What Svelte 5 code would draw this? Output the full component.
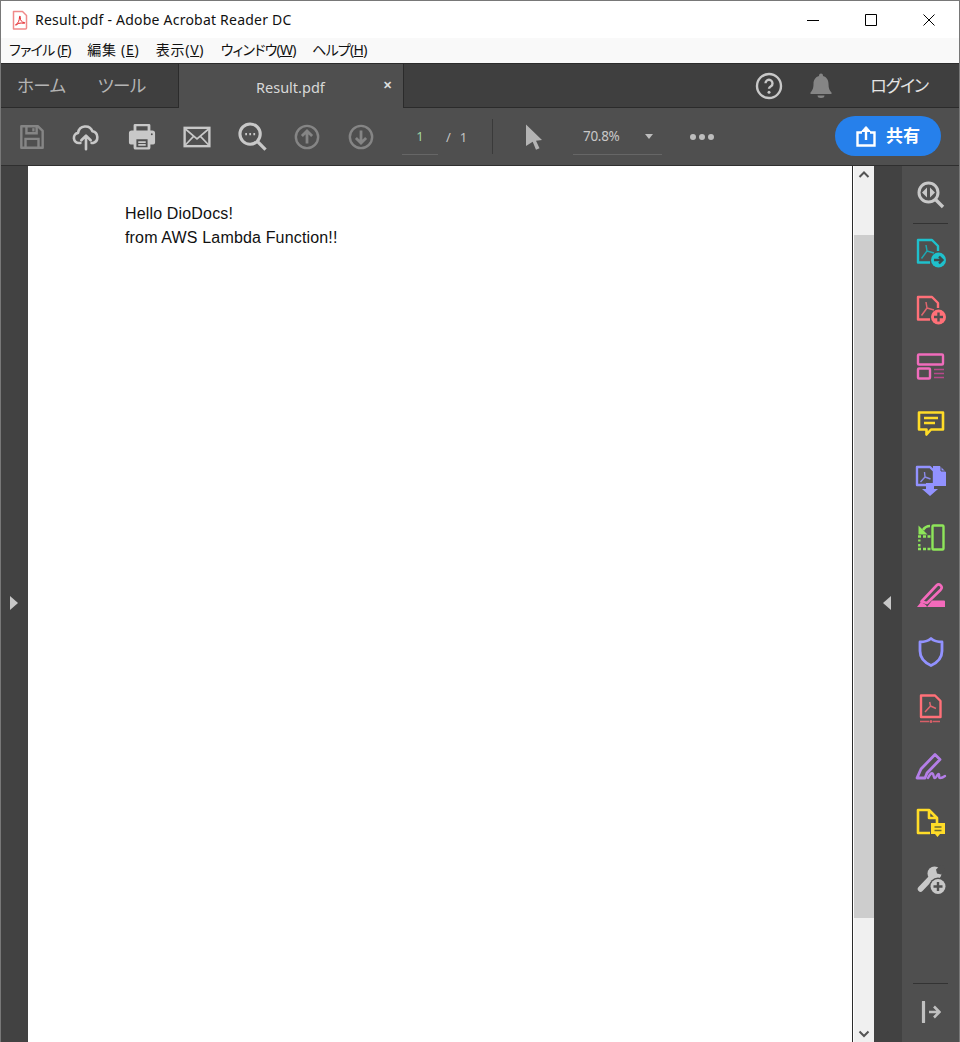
<script>
  const menus = [
    ['ファイル (', 'F', ')', 'kana'],
    ['編集 (', 'E', ')', 'kanji'],
    ['表示(', 'V', ')', 'kanji'],
    ['ウィンドウ(', 'W', ')', 'kana'],
    ['ヘルプ(', 'H', ')', 'kana']
  ];
</script>

<div class="win">
  <header class="title">
    <svg class="pdf" width="16" height="20" viewBox="0 0 16 20" fill="none">
      <path d="M1.500 1.500h9l4 4v12.500a1 1 0 0 1-1 1h-12z" fill="#fff" stroke="#f08a8a" stroke-width="1.500" stroke-linejoin="round"/>
      <path d="M4 14.500c2-1 3.500-4 3.500-7.500 0-1.500 1.200-1 .8.800-.4 2 1.700 4.700 3.700 4.700 1.500 0 1 1.200-.5.800-2-.5-5-.5-7 1.500-.8.800-1.500 0-.5-.3z" stroke="#e5252a" stroke-width="1"/>
    </svg>
    <span class="title-text">Result.pdf - Adobe Acrobat Reader DC</span>
    <div class="winbtns">
      <svg width="14" height="14" viewBox="0 0 14 14"><path d="M1 7.500h12" stroke="#000" stroke-width="1"/></svg>
      <svg width="14" height="14" viewBox="0 0 14 14"><path d="M1.500 1.500h11v11h-11z" stroke="#000" fill="none"/></svg>
      <svg width="14" height="14" viewBox="0 0 14 14"><path d="M1.500 1.500l11 11M12.500 1.500l-11 11" stroke="#000" fill="none"/></svg>
    </div>
  </header>

  <nav class="menu">
    {#each menus as m}
      <span class={m[3]}>{m[0]}<u>{m[1]}</u>{m[2]}</span>
    {/each}
  </nav>

  <div class="tabs">
    <div class="tab-links"><span>ホーム</span><span>ツール</span></div>
    <div class="doc-tab"><span class="doc-name">Result.pdf</span><span class="close">✕</span></div>
    <div class="tab-right">
      <svg width="28" height="28" viewBox="0 0 28 28" fill="none">
        <circle cx="14" cy="14" r="12" stroke="#c8c8c8" stroke-width="2.400"/>
        <path d="M10.500 11.300a3.500 3.500 0 1 1 5.400 3c-1.300.8-1.900 1.300-1.900 2.500" stroke="#c8c8c8" stroke-width="2.400"/>
        <circle cx="14" cy="20.300" r="1.500" fill="#c8c8c8"/>
      </svg>
      <svg width="24" height="28" viewBox="0 0 24 28" fill="#858585">
        <path d="M12 1.500a2 2 0 0 1 2 2v.6c3.700 1 5.500 4 5.500 8 0 4.500 1.200 6.500 3 8.400v1.500h-21v-1.500c1.800-1.900 3-3.900 3-8.400 0-4 1.800-7 5.500-8v-.6a2 2 0 0 1 2-2z"/>
        <path d="M8.500 23.500h7a3.500 2.500 0 0 1-7 0z"/>
      </svg>
      <span class="login">ログイン</span>
    </div>
  </div>

  <div class="toolbar">
    <div class="tools">
      <svg width="26" height="26" viewBox="0 0 28 28" fill="none" stroke="#858585" stroke-width="2.600">
        <path d="M2.500 2.500h18l5 5v18h-23z" stroke-linejoin="round"/>
        <path d="M8 2.500v7.500h11V2.500M7 25.500V16h14v9.500"/>
        <path d="M15.500 4.500v3.500" stroke-width="2.500"/>
      </svg>
      <svg width="28" height="30" viewBox="0 0 30 30" fill="none" stroke="#c8c8c8" stroke-width="2.800" stroke-linecap="round" stroke-linejoin="round">
        <path d="M9 21.500H7.500a5.500 5.500 0 0 1-1-10.900 8 8 0 0 1 15.400-1.700 6.500 6.500 0 0 1 .6 12.600H21"/>
        <path d="M15 28V14M10 18.500l5-5 5 5"/>
      </svg>
      <svg width="28" height="28" viewBox="0 0 30 30">
        <path fill="#c8c8c8" d="M6 8V2.500a1.500 1.500 0 0 1 1.500-1.500h15A1.500 1.500 0 0 1 24 2.500V8h2a3 3 0 0 1 3 3v10a2 2 0 0 1-2 2h-3v3.500a2 2 0 0 1-2 2H8a2 2 0 0 1-2-2V23H3a2 2 0 0 1-2-2V11a3 3 0 0 1 3-3z"/>
        <path fill="#4f4f4f" d="M9 3.500h12V8H9zM9 17.500h12V26H9z"/>
        <path stroke="#c8c8c8" stroke-width="2" d="M11 20.500h8M11 23.500h8"/>
        <circle cx="25.500" cy="12" r="1" fill="#4f4f4f"/>
      </svg>
      <svg width="28" height="22" viewBox="0 0 30 24" fill="none" stroke="#c8c8c8">
        <rect x="1.500" y="2" width="27" height="20" stroke-width="2.600"/>
        <path d="M2 3l13 11L28 3M2 21l9.500-10M28 21l-9.500-10" stroke-width="1.800"/>
      </svg>
      <svg width="29" height="29" viewBox="0 0 30 30" fill="none" stroke="#c8c8c8">
        <circle cx="12.500" cy="12.500" r="10.500" stroke-width="3.200"/>
        <path d="M20.500 20.500l8 8" stroke-width="3.400"/>
        <path d="M7.500 12.500h1.800M11.700 12.500h1.800M15.900 12.500h1.800" stroke-width="2.400"/>
      </svg>
      <svg width="26" height="26" viewBox="0 0 28 28" fill="none" stroke="#858585" stroke-width="2.600">
        <circle cx="14" cy="14" r="12"/>
        <path d="M14 21V8M8.500 13L14 7.500l5.500 5.500" stroke-width="3"/>
      </svg>
      <svg width="26" height="26" viewBox="0 0 28 28" fill="none" stroke="#858585" stroke-width="2.600">
        <circle cx="14" cy="14" r="12"/>
        <path d="M14 7v13M8.500 15l5.500 5.500 5.500-5.500" stroke-width="3"/>
      </svg>
    </div>
    <div class="page-nav">
      <span class="page-box">1</span><span class="slash">/</span><span>1</span>
    </div>
    <div class="vsep"></div>
    <svg class="cursor" width="18" height="26" viewBox="0 0 18 26"><path fill="#b4b4b4" d="M1 .5l16 15.500-6 .8 3.500 7.500-3.500 1.500-3.300-8L1 22z"/></svg>
    <div class="zoom-box"><span>70.8%</span><i></i></div>
    <div class="dots"><b></b><b></b><b></b></div>
    <button class="share">
      <svg width="20" height="22" viewBox="0 0 20 22" fill="none" stroke="#fff" stroke-width="2.400">
        <path d="M6 7.500H1.500v13h17v-13H14"/>
        <path d="M10 15V2.500"/>
        <path d="M5.500 6.500L10 1.500l4.500 5z" fill="#fff" stroke-width="1"/>
      </svg>
      <span>共有</span>
    </button>
  </div>

  <main class="body">
    <aside class="rail-left"><i class="arr-r"></i></aside>
    <section class="page">
      <p>Hello DioDocs!</p>
      <p>from AWS Lambda Function!!</p>
    </section>
    <div class="scroll">
      <svg width="20" height="16" viewBox="0 0 20 16" fill="none" stroke="#555" stroke-width="2"><path d="M5.500 10.500L10 6l4.500 4.500"/></svg>
      <div class="track-top"></div>
      <div class="thumb"></div>
      <div class="track-bottom"></div>
      <svg width="20" height="16" viewBox="0 0 20 16" fill="none" stroke="#555" stroke-width="2"><path d="M5.500 6L10 10.500 14.500 6"/></svg>
    </div>
    <aside class="rail-mid"><i class="arr-l"></i></aside>
    <aside class="rail-right">
      <div class="ico first">
        <svg width="28" height="28" viewBox="0 0 28 28" fill="none" stroke="#c8c8c8">
          <circle cx="11.500" cy="11.500" r="9.500" stroke-width="3"/>
          <path d="M18.500 18.500l7.500 7.500" stroke-width="3.400"/>
          <path d="M10 6.500v10l-5-5zM13 6.500v10l5-5z" fill="#c8c8c8" stroke="none"/>
        </svg>
      </div>
      <div class="hsep"></div>
      <div class="ico">
        <svg width="30" height="30" viewBox="0 0 30 30" fill="none" stroke="#1fc0cc" stroke-width="2.400">
          <path d="M14 24.500H2V2h14l6 6v5" stroke-linejoin="round"/>
          <path d="M5.500 20.500L11 13l-1-6M11 13l7 2" stroke-width="1.500" stroke="#1ea5b0"/>
          <circle cx="22.500" cy="22" r="7.500" fill="#1fc0cc" stroke="none"/>
          <path d="M18 22h8M23 18.500l3.500 3.500-3.500 3.500" stroke="#3d4a4d" stroke-width="2.400"/>
        </svg>
      </div>
      <div class="ico">
        <svg width="30" height="30" viewBox="0 0 30 30" fill="none" stroke="#ff7078" stroke-width="2.400">
          <path d="M14 24.500H2V2h14l6 6v5" stroke-linejoin="round"/>
          <path d="M5.500 20.500L11 13l-1-6M11 13l7 2" stroke-width="1.500" stroke="#e0666e"/>
          <circle cx="22.500" cy="22" r="7.500" fill="#ff7078" stroke="none"/>
          <path d="M18 22h9M22.500 17.500v9" stroke="#4f4f4f" stroke-width="2.400"/>
        </svg>
      </div>
      <div class="ico">
        <svg width="30" height="28" viewBox="0 0 30 28" fill="none" stroke="#f06cbc" stroke-width="2.400">
          <rect x="2" y="1.500" width="25" height="10" rx="1"/>
          <rect x="2" y="15.500" width="12" height="10" rx="1"/>
          <path d="M18 16.500h10M18 20.500h10M18 24.500h10" stroke="#b8488c" stroke-width="1.600"/>
        </svg>
      </div>
      <div class="ico">
        <svg width="28" height="28" viewBox="0 0 28 28" fill="none" stroke="#ffdc28" stroke-width="2.600">
          <path d="M2 2.500h24v17H14l-4.500 5v-5H2z" stroke-linejoin="round"/>
          <path d="M7 8h14M7 13h11" stroke-width="2.400"/>
        </svg>
      </div>
      <div class="ico">
        <svg width="32" height="32" viewBox="0 0 32 32">
          <path d="M18 1h7l6 6v14H19v-9l-1-2z" fill="#9292ff"/>
          <path d="M26 1v5h5" fill="none" stroke="#4f4f4f" stroke-width="1"/>
          <path d="M2 2h13l4 4v14H2z" fill="#4f4f4f" stroke="#9292ff" stroke-width="2.400" stroke-linejoin="round"/>
          <path d="M5.500 17L10 12 9.500 7M10 12l5.500 2" fill="none" stroke="#8a8ae8" stroke-width="1.400"/>
          <path d="M11 18h8v6h4l-8 7-8-7h4z" fill="#9292ff"/>
        </svg>
      </div>
      <div class="ico">
        <svg width="28" height="28" viewBox="0 0 28 28" fill="none" stroke="#8ee65a" stroke-width="2.400">
          <rect x="15.500" y="1.500" width="11" height="24" rx="1"/>
          <path d="M1 12.500h3M6 12.500h3M10.500 12.500h3M1 25h3M6 25h3M10.500 25h3M2.300 15.500v2M2.300 20v2.500"/>
          <path d="M1.500 1.500v9h9z" fill="#8ee65a" stroke="none"/>
          <path d="M6 6c1.500-2.500 4-4 7-4" stroke-width="2.600"/>
        </svg>
      </div>
      <div class="ico">
        <svg width="30" height="26" viewBox="0 0 30 26" fill="none">
          <path d="M5.500 19.500L20.500 3.500a3 3 0 0 1 4.200 0 3 3 0 0 1 0 4.200L11 21z" stroke="#f46abc" stroke-width="2.600" stroke-linejoin="round"/>
          <path d="M1 25l4-5 5 3 1 2zM16 18.500h12a1 1 0 0 1 1 1V25H11z" fill="#f46abc"/>
        </svg>
      </div>
      <div class="ico">
        <svg width="26" height="30" viewBox="0 0 26 30" fill="none" stroke="#9292ff" stroke-width="2.800">
          <path d="M13 1.500c3 2.500 7 3.500 11 3.500v9c0 7-4.500 11.500-11 14.500C6.500 25.500 2 21 2 14V5c4 0 8-1 11-3.500z" stroke-linejoin="round"/>
        </svg>
      </div>
      <div class="ico">
        <svg width="24" height="30" viewBox="0 0 24 30" fill="none" stroke="#ff7078" stroke-width="2.400">
          <path d="M2 1.500h14l5.500 5.500v16H2z" stroke-linejoin="round"/>
          <path d="M6 18l5.500-6-.8-4M11.500 12l5.500 2.500" stroke="#e0666e" stroke-width="1.500"/>
          <path d="M1 27.500h9M14 27.500h7" stroke="#d85f68" stroke-width="1.400"/>
          <circle cx="12" cy="27.500" r="1.500" fill="#d85f68" stroke="none"/>
        </svg>
      </div>
      <div class="ico">
        <svg width="32" height="28" viewBox="0 0 32 28" fill="none" stroke="#b47ee8" stroke-width="2.800" stroke-linecap="round" stroke-linejoin="round">
          <path d="M2 26l4-9L20 2.500l5 5L12 21l-2 5H2z"/>
          <path d="M13 26c2-4 4-6 5-4s.5 4 2 4 2-4 3.500-4-.5 4 1.500 4 3-.5 5-2" stroke-width="2.400"/>
        </svg>
      </div>
      <div class="ico">
        <svg width="30" height="30" viewBox="0 0 30 30" fill="none" stroke="#ffdc28" stroke-width="2.600">
          <path d="M14 25H2V2h11l8 8v5M13 2v8h8" stroke-linejoin="round"/>
          <path d="M15 15h14v11h-5l-2.500 3-2.500-3h-4z" fill="#ffdc28" stroke="none"/>
          <path d="M18.500 19h7M18.500 22.500h7" stroke="#6e6a2e" stroke-width="1.500"/>
        </svg>
      </div>
      <div class="ico">
        <svg width="30" height="30" viewBox="0 0 30 30" fill="none">
          <path d="M4.500 24L15 13" stroke="#c8c8c8" stroke-width="5.500" stroke-linecap="round"/>
          <circle cx="18.500" cy="8.500" r="7" fill="#c8c8c8"/>
          <path d="M26 -1l-6 5.500 1 4 4 1 5-5z" fill="#4f4f4f"/>
          <circle cx="22" cy="21.500" r="9" fill="#4f4f4f"/>
          <circle cx="22" cy="21.500" r="7.500" fill="#c8c8c8"/>
          <path d="M17.500 21.500h9M22 17v9" stroke="#4f4f4f" stroke-width="2.400"/>
        </svg>
      </div>
      <div class="spacer"></div>
      <div class="hsep"></div>
      <div class="ico last">
        <svg width="20" height="22" viewBox="0 0 20 22" fill="none" stroke="#c0c0c0">
          <path d="M2.500 1v20" stroke-width="3.200" stroke-linecap="round"/>
          <path d="M8 11h10M13 5.500l5.500 5.500-5.500 5.500" stroke-width="2.600"/>
        </svg>
      </div>
    </aside>
  </main>
</div>

<style>
  :global(body) { margin: 0; }
  .win {
    width: 960px; height: 1042px; box-sizing: border-box; overflow: hidden;
    border: 1px solid #787878; border-bottom-width: 0;
    display: flex; flex-direction: column;
    font-family: "Noto Sans", "Noto Sans CJK JP", sans-serif;
    font-feature-settings: "palt";
  }
  .title {
    height: 37px; flex: none; background: #fff; display: flex; align-items: center;
    padding-left: 11px; color: #111; font-size: 14px;
  }
  .pdf { margin-right: 7px; }
  .title-text { letter-spacing: .22px; }
  .winbtns { margin-left: auto; display: flex; align-items: center; gap: 44px; padding-right: 23px; }
  .menu {
    height: 26px; flex: none; background: #f9f9f9; display: flex; align-items: center;
    padding: 0 0 3px 8px; gap: 16.500px; font-size: 14px; color: #111; box-sizing: border-box;
    border-bottom: 1px solid #2c2c2c;
  }
  .menu span { white-space: nowrap; }
  .menu .kana { letter-spacing: -.75px; }
  .menu .kanji { letter-spacing: .7px; }
  .tabs {
    height: 44px; flex: none; background: #3f3f3f; display: flex; box-sizing: border-box;
    border-bottom: 1px solid #2b2b2b;
  }
  .tab-links {
    width: 178px; flex: none; box-sizing: border-box; padding: 0 0 2px 16px; display: flex; gap: 32px;
    align-items: center; color: #b4b4b4; font-size: 17.500px; letter-spacing: -.5px;
    border-right: 1px solid #2b2b2b;
  }
  .doc-tab {
    width: 225px; height: 44px; flex: none; box-sizing: border-box; background: #4f4f4f; border-right: 1px solid #2b2b2b;
    display: flex; align-items: center; color: #d8d8d8; font-size: 14.500px; padding-left: 77px;
  }
  .doc-name { padding-top: 1px; }
  .close { margin-left: 58px; font-size: 11px; color: #ddd; font-weight: 700; padding-bottom: 4px; }
  .tab-right { margin-left: auto; display: flex; align-items: center; padding-right: 31px; color: #e4e4e4; }
  .tab-right svg:first-child { margin-right: 26px; }
  .login { margin-left: 37px; font-size: 17px; letter-spacing: -1.1px; padding-bottom: 2px; }
  .toolbar {
    height: 58px; flex: none; background: #4f4f4f; display: flex; align-items: center; box-sizing: border-box;
    border-bottom: 1px solid #2f2f2f; position: relative;
  }
  .tools { display: flex; align-items: center; width: 401px; flex: none; box-sizing: border-box; padding-left: 18px; gap: 27.300px; }
  .page-nav { display: flex; align-items: center; font-size: 13px; color: #c4c4c4; width: 90px; flex: none; }
  .page-box {
    width: 36px; height: 37px; box-sizing: border-box; border-bottom: 1px solid #666; display: flex; align-items: center;
    justify-content: center; color: #9fd6a0;
  }
  .slash { margin: 0 9px 0 8px; }
  .vsep { width: 1px; height: 35px; background: #3a3a3a; flex: none; }
  .cursor { margin-left: 32px; }
  .zoom-box {
    width: 89px; height: 37px; box-sizing: border-box; margin-left: 30px; border-bottom: 1px solid #666;
    display: flex; align-items: center; padding-left: 10px; color: #c8c8c8; font-size: 13.500px; letter-spacing: -.3px; flex: none;
  }
  .zoom-box i {
    margin-left: auto; margin-right: 9px; width: 0; height: 0; border: 4.500px solid transparent;
    border-top: 5px solid #bdbdbd; border-bottom: 0;
  }
  .dots { display: flex; gap: 3px; margin-left: 28px; }
  .dots b { width: 6px; height: 6px; border-radius: 50%; background: #bdbdbd; display: block; }
  .share {
    position: absolute; left: 834px; top: 8px; width: 106px; height: 40px; border: 0; border-radius: 20px;
    background: #2680eb; color: #fff; display: flex; align-items: center; justify-content: center; gap: 10px;
    font: 700 17px "Noto Sans CJK JP", sans-serif; padding: 0;
  }
  .share span { padding-bottom: 3px; }
  .body { flex: 1; display: flex; min-height: 0; }
  .rail-left { width: 27px; flex: none; background: #424242; display: flex; align-items: center; justify-content: center; padding-bottom: 3px; box-sizing: border-box; }
  .arr-r { border-left: 8px solid #c8c8c8; border-top: 7px solid transparent; border-bottom: 7px solid transparent; margin-left: -1px; }
  .arr-l { border-right: 8px solid #c8c8c8; border-top: 7px solid transparent; border-bottom: 7px solid transparent; margin-left: -2px; }
  .page {
    flex: none; width: 825px; background: #fff; box-sizing: border-box; padding: 36px 0 0 97px;
    font: 16px/24px "Liberation Sans", sans-serif; letter-spacing: .16px; color: #111; border-right: 1px solid #2c2c2c;
  }
  .page p { margin: 0; }
  .scroll { width: 21px; flex: none; background: #f0f0f0; display: flex; flex-direction: column; box-sizing: border-box; border-left: 1px solid #fff; }
  .scroll svg { flex: none; height: 17px; }
  .track-top { height: 52px; flex: none; }
  .thumb { height: 683px; background: #cdcdcd; flex: none; }
  .track-bottom { flex: 1; }
  .rail-mid { width: 28px; flex: none; background: #424242; display: flex; align-items: center; justify-content: center; padding-bottom: 3px; box-sizing: border-box; }
  .rail-right { flex: 1; background: #4f4f4f; display: flex; flex-direction: column; align-items: center; }
  .ico { height: 57px; display: flex; align-items: center; justify-content: center; flex: none; width: 100%; }
  .ico.last { height: 58px; box-sizing: border-box; padding-bottom: 2px; }
  .hsep { width: 35px; height: 1px; background: #333; flex: none; }
  .spacer { flex: 1; }
</style>
